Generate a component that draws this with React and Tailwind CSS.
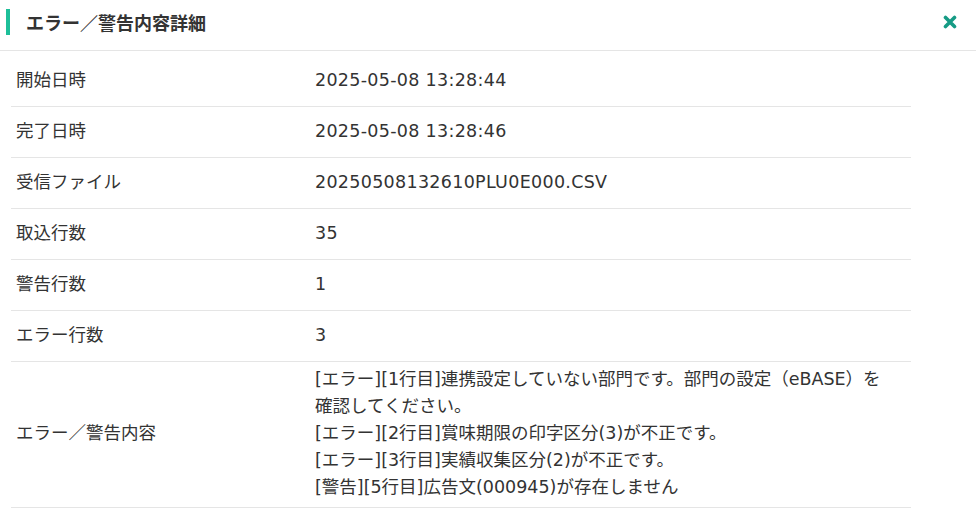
import React from "react";

const rows = [
  { label: "開始日時", value: "2025-05-08 13:28:44" },
  { label: "完了日時", value: "2025-05-08 13:28:46" },
  { label: "受信ファイル", value: "20250508132610PLU0E000.CSV" },
  { label: "取込行数", value: "35" },
  { label: "警告行数", value: "1" },
  { label: "エラー行数", value: "3" },
];

const messages = [
  "[エラー][1行目]連携設定していない部門です。部門の設定（eBASE）を確認してください。",
  "[エラー][2行目]賞味期限の印字区分(3)が不正です。",
  "[エラー][3行目]実績収集区分(2)が不正です。",
  "[警告][5行目]広告文(000945)が存在しません",
];

export default function App() {
  return (
    <div
      className="w-[976px] h-[514px] bg-white text-[#333] overflow-hidden"
      style={{ fontFamily: '"DejaVu Sans", "Noto Sans CJK JP", sans-serif' }}
    >
      {/* Header */}
      <div className="flex items-center justify-between h-[51px] border-b border-[#e5e5e5]">
        <div className="flex items-center h-full">
          <div className="ml-[6px] w-[4px] h-[26px] bg-[#1dbf99] -mt-[6px]" />
          <h2
            className="ml-[16px] -mt-[6px] text-[18px] font-bold text-[#333]"
            style={{ fontFamily: '"Noto Sans CJK JP", sans-serif' }}
          >
            エラー／警告内容詳細
          </h2>
        </div>
        <button className="mr-[19px] -mt-[6px] text-[#169b85]">
          <svg width="14" height="14" viewBox="0 0 14 14">
            <path
              d="M2.5 2.5 L11.5 11.5 M11.5 2.5 L2.5 11.5"
              stroke="currentColor"
              strokeWidth="3.6"
              strokeLinecap="round"
            />
          </svg>
        </button>
      </div>

      {/* Detail table */}
      <div className="mt-[5px] ml-[11px] w-[900px] text-[17.5px] text-[#333]">
        {rows.map((r) => (
          <div key={r.label} className="flex items-center h-[51px] border-b border-[#e5e5e5]">
            <div className="w-[299px] pl-[5px] -mt-[2px]">{r.label}</div>
            <div className="flex-1 pl-[5px] -mt-[2px] tracking-[0.3px]">{r.value}</div>
          </div>
        ))}
        <div className="flex items-center border-b border-[#e5e5e5] pt-[4px] pb-[6px]">
          <div className="w-[299px] pl-[5px]">エラー／警告内容</div>
          <div className="flex-1 pl-[5px] pr-[30px] leading-[27px]">
            {messages.map((m) => (
              <div key={m}>{m}</div>
            ))}
          </div>
        </div>
      </div>
    </div>
  );
}
